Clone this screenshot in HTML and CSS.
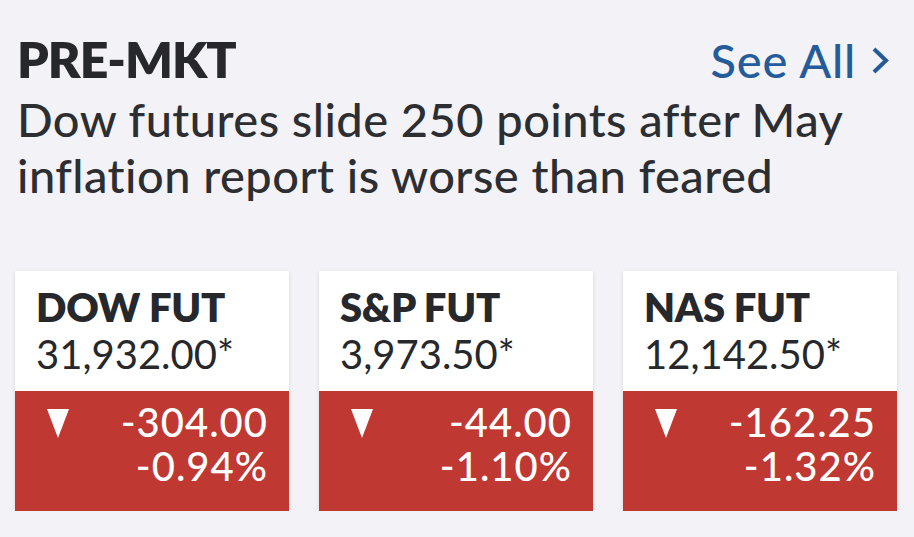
FILE: index.html
```
<!DOCTYPE html>
<html>
<head>
<meta charset="utf-8">
<link rel="stylesheet" href="styles.css">
</head>
<body>
<div class="wrap">
  <div class="header">
    <div class="label">PRE-MKT</div>
    <div class="see-all">See All
      <svg class="chev" width="18" height="27" viewBox="0 0 18 27"><path d="M3 2 L15 13.5 L3 25" fill="none" stroke="#245b9b" stroke-width="4"/></svg>
    </div>
  </div>
  <div class="headline">Dow futures slide 250 points after May inflation report is worse than feared</div>
  <div class="cards">
    <div class="card">
      <div class="top">
        <div class="name">DOW FUT</div>
        <div class="price">31,932.00*</div>
      </div>
      <div class="change">
        <svg class="tri" width="22" height="29" viewBox="0 0 22 29"><polygon points="0,0 22,0 11,29" fill="#fff"/></svg>
        <div class="vals"><div>-304.00</div><div>-0.94%</div></div>
      </div>
    </div>
    <div class="card">
      <div class="top">
        <div class="name">S&amp;P FUT</div>
        <div class="price">3,973.50*</div>
      </div>
      <div class="change">
        <svg class="tri" width="22" height="29" viewBox="0 0 22 29"><polygon points="0,0 22,0 11,29" fill="#fff"/></svg>
        <div class="vals"><div>-44.00</div><div>-1.10%</div></div>
      </div>
    </div>
    <div class="card">
      <div class="top">
        <div class="name">NAS FUT</div>
        <div class="price">12,142.50*</div>
      </div>
      <div class="change">
        <svg class="tri" width="22" height="29" viewBox="0 0 22 29"><polygon points="0,0 22,0 11,29" fill="#fff"/></svg>
        <div class="vals"><div>-162.25</div><div>-1.32%</div></div>
      </div>
    </div>
  </div>
</div>
</body>
</html>
```
FILE: styles.css
```
html, body {
  margin: 0;
  padding: 0;
  background: #f2f2f7;
}
body {
  font-family: Lato, "Liberation Sans", sans-serif;
  color: #26282b;
}
.wrap {
  padding: 31px 17px 0 17px;
}
.header {
  display: flex;
  justify-content: space-between;
  align-items: baseline;
  height: 56px;
}
.label {
  font-size: 50px;
  font-weight: 800;
  line-height: 56px;
  letter-spacing: -1px;
}
.see-all {
  font-size: 47px;
  font-weight: 500;
  line-height: 56px;
  letter-spacing: 0.8px;
  color: #245b9b;
  display: flex;
  align-items: center;
  gap: 15px;
  padding-right: 8px;
}
.chev {
  display: block;
}
.headline {
  margin-top: 4px;
  font-size: 47px;
  font-weight: 500;
  line-height: 56px;
  letter-spacing: 0.45px;
  color: #2c2e32;
  max-width: 880px;
}
.cards {
  margin-top: 68px;
  display: flex;
  gap: 30px;
  margin-left: -2px;
}
.card {
  width: 274px;
  box-shadow: 0 1px 4px rgba(0, 0, 0, 0.12);
}
.top {
  background: #fff;
  height: 120px;
  box-sizing: border-box;
  padding: 13px 21px 0 21px;
  line-height: 47px;
}
.name {
  font-size: 40px;
  font-weight: 800;
  letter-spacing: -0.3px;
}
.price {
  font-size: 40px;
}
.change {
  background: #c03832;
  height: 120px;
  box-sizing: border-box;
  padding: 9px 22px 0 32px;
  display: flex;
  justify-content: space-between;
  color: #fff;
  font-size: 40px;
  font-weight: 500;
  line-height: 44px;
  letter-spacing: 1px;
}
.tri {
  display: block;
  margin-top: 9px;
}
.vals {
  text-align: right;
  margin-right: -1px;
}
```
